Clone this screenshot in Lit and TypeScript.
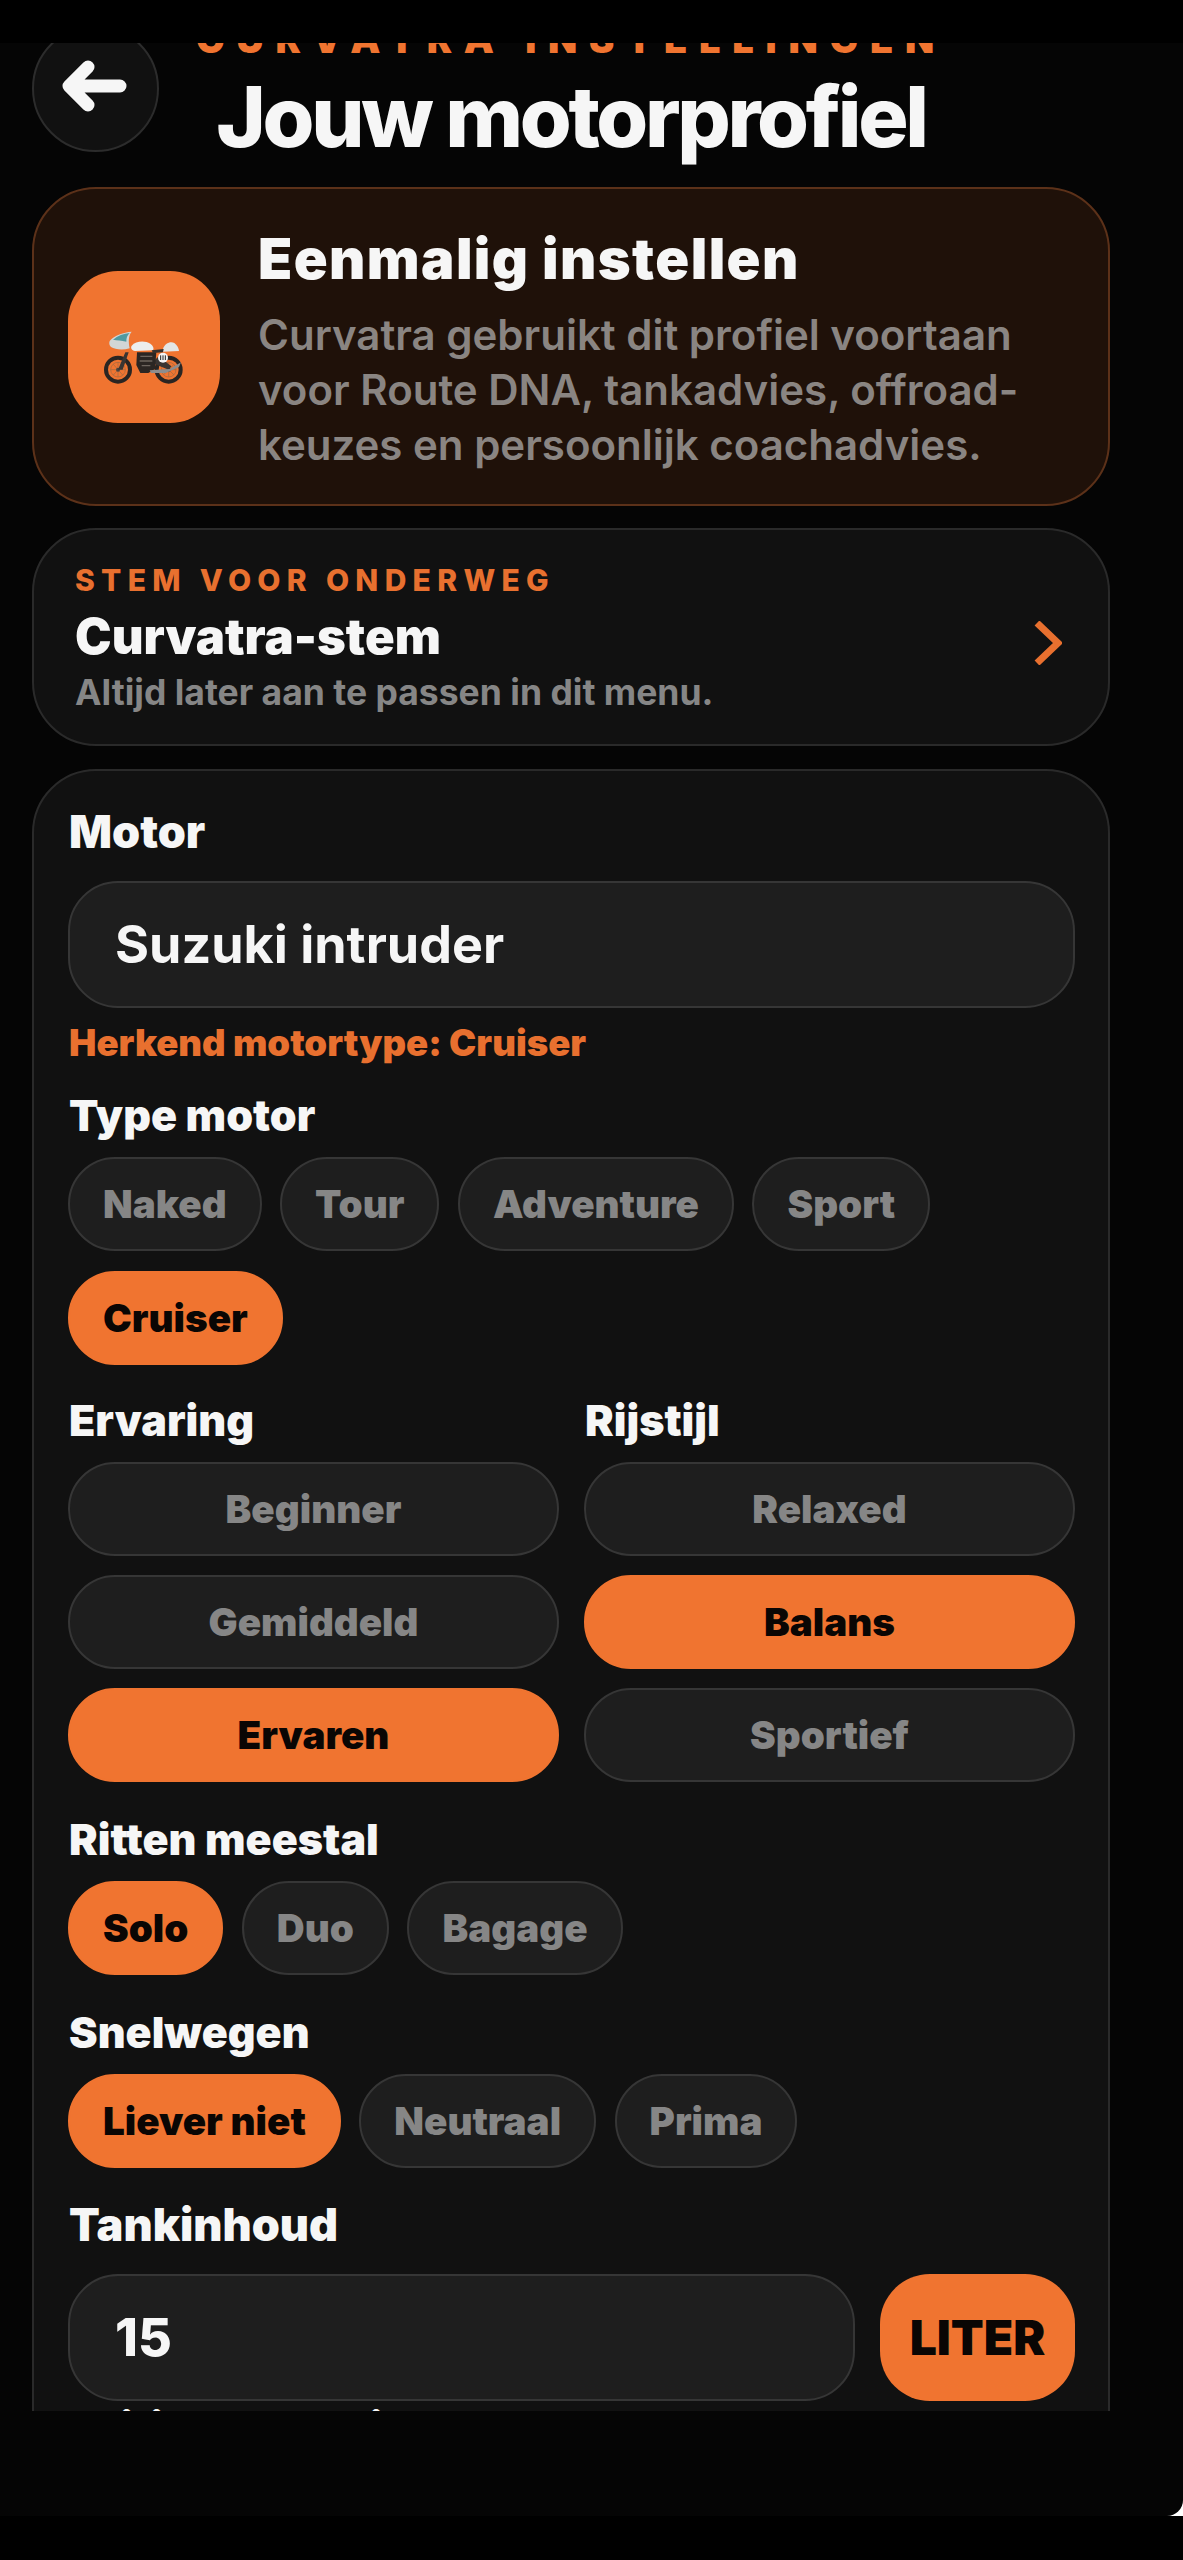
import { LitElement, html, css } from 'lit';
import { customElement } from 'lit/decorators.js';

const TYPES = [
  { name: 'Naked' },
  { name: 'Tour' },
  { name: 'Adventure' },
  { name: 'Sport' },
  { name: 'Cruiser', active: true },
];
const ERVARING = [{ name: 'Beginner' }, { name: 'Gemiddeld' }, { name: 'Ervaren', active: true }];
const RIJSTIJL = [{ name: 'Relaxed' }, { name: 'Balans', active: true }, { name: 'Sportief' }];
const RITTEN = [{ name: 'Solo', active: true }, { name: 'Duo' }, { name: 'Bagage' }];
const SNELWEGEN = [{ name: 'Liever niet', active: true }, { name: 'Neutraal' }, { name: 'Prima' }];

type Chip = { name: string; active?: boolean };

@customElement('app-root')
export class AppRoot extends LitElement {
  static styles = css`
    :host {
      display: block;
      height: 2560px;
      background: #000;
      overflow: hidden;
      font-family: Inter, "Liberation Sans", sans-serif;
      color: #f6f6f6;
    }

    .clip {
      margin-top: 43px;
      height: 2368px;
      overflow: hidden;
      background: #050505;
    }

    .content {
      width: 1078px;
      margin: -18px 0 0 32px;
    }

    /* header: back button and title share one grid cell */
    .header {
      display: grid;
      height: 162px;
    }
    .back {
      grid-area: 1 / 1;
      width: 127px;
      height: 127px;
      box-sizing: border-box;
      border-radius: 50%;
      background: #111;
      border: 2px solid #2c2c2c;
      display: flex;
      align-items: center;
      justify-content: center;
      z-index: 1;
    }
    .back svg {
      width: 127px;
      height: 127px;
      flex: none;
    }
    .titles {
      grid-area: 1 / 1;
      text-align: center;
    }
    .eyebrow {
      font-size: 38px;
      line-height: 40px;
      font-weight: 900;
      letter-spacing: 0.31em;
      color: #f07430;
      margin-top: -6px;
      white-space: nowrap;
    }
    h1 {
      margin: 12px 0 0;
      font-size: 84px;
      line-height: 92px;
      font-weight: 800;
      letter-spacing: -0.04em;
      white-space: nowrap;
    }

    .card {
      box-sizing: border-box;
      border-radius: 64px;
      border: 2px solid #2a2a2a;
      background: #111;
    }

    .hero {
      height: 319px;
      background: #1f1109;
      border-color: #5c3119;
      display: flex;
      align-items: center;
      gap: 38px;
      padding-left: 34px;
    }
    .hero-icon {
      flex: none;
      width: 152px;
      height: 152px;
      border-radius: 50px;
      background: #f07430;
    }
    .hero-icon svg {
      display: block;
      width: 152px;
      height: 152px;
    }
    .hero-text {
      padding-top: 6px;
    }
    .hero h2 {
      margin: 0;
      font-size: 56px;
      line-height: 64px;
      font-weight: 900;
      letter-spacing: 0.025em;
    }
    .hero p {
      margin: 16px 0 0;
      width: 800px;
      font-size: 42px;
      line-height: 55px;
      font-weight: 600;
      color: #8a8582;
    }

    .voice {
      height: 218px;
      margin-top: 22px;
      padding: 0 46px 0 41px;
      display: flex;
      align-items: center;
      justify-content: space-between;
    }
    .voice-kicker {
      font-size: 30px;
      line-height: 34px;
      font-weight: 800;
      letter-spacing: 0.21em;
      color: #e8702f;
      margin-top: 2px;
    }
    .voice-name {
      font-size: 49px;
      line-height: 56px;
      font-weight: 900;
      margin-top: 12px;
    }
    .voice-sub {
      font-size: 35.5px;
      line-height: 40px;
      font-weight: 700;
      color: #868686;
      margin-top: 8px;
    }
    .voice svg {
      flex: none;
      width: 28px;
      height: 44px;
      margin-top: 12px;
    }

    .form {
      margin-top: 23px;
      padding: 36px 33px 60px 34px;
      border-radius: 64px 64px 0 0;
    }
    .label {
      font-size: 43px;
      line-height: 50px;
      font-weight: 900;
      margin-bottom: 17px;
      padding-left: 1px;
      white-space: nowrap;
    }
    .label.big {
      font-size: 45px;
      margin-bottom: 24px;
    }
    .field {
      margin-top: 32px;
    }
    .motor .label {
      font-size: 45px;
      margin-bottom: 24px;
    }
    .input {
      box-sizing: border-box;
      height: 127px;
      border-radius: 50px;
      border: 2px solid #363636;
      background: #1e1e1e;
      padding-left: 45px;
      display: flex;
      align-items: center;
      font-size: 52px;
      font-weight: 700;
    }
    .hint {
      margin-top: 13px;
      padding-left: 1px;
      font-size: 36.5px;
      line-height: 44px;
      font-weight: 900;
      color: #e8702f;
    }
    .hint + .field {
      margin-top: 25px;
    }

    .chips {
      display: flex;
      flex-wrap: wrap;
      gap: 20px 18.5px;
    }
    .chip {
      box-sizing: border-box;
      height: 94px;
      padding: 0 33px;
      border-radius: 47px;
      border: 2px solid #363636;
      background: #1e1e1e;
      color: #868686;
      font-size: 38.6px;
      font-weight: 900;
      display: flex;
      align-items: center;
      justify-content: center;
      white-space: nowrap;
    }
    .chip.on {
      background: #f07430;
      border-color: #f07430;
      color: #0a0604;
    }

    .columns {
      display: grid;
      grid-template-columns: 491px 491px;
      column-gap: 25px;
      margin-top: 30px;
    }
    .columns .field {
      margin-top: 0;
    }
    .stack {
      display: flex;
      flex-direction: column;
      gap: 19px;
    }

    .tank {
      display: flex;
      gap: 25px;
    }
    .tank .input {
      flex: 1;
      font-size: 52px;
      font-weight: 800;
    }
    .unit {
      flex: none;
      width: 195px;
      height: 127px;
      border-radius: 50px;
      background: #f07430;
      color: #0a0604;
      font-size: 48px;
      font-weight: 900;
      display: flex;
      align-items: center;
      justify-content: center;
    }
    .cut {
      margin-top: 1px;
    }

    .footer {
      height: 105px;
      background: #fff;
    }
    .footer div {
      height: 105px;
      background: #050505;
      border-bottom-right-radius: 16px;
    }
  `;

  private chips(items: Chip[]) {
    return items.map(
      (c) => html`<div class="chip ${c.active ? 'on' : ''}">${c.name}</div>`
    );
  }

  private bike() {
    // drawn on the coordinates of the icon tile
    return html`<svg viewBox="55 62 456 456">
      <g fill="none" stroke="#2a2522">
        <circle cx="205" cy="358" r="36" stroke-width="12" />
        <circle cx="357" cy="358" r="36" stroke-width="12" />
      </g>
      <g fill="none" stroke="#9a6a45" stroke-width="2">
        <circle cx="205" cy="358" r="22" />
        <circle cx="357" cy="358" r="22" />
        <path d="M205 336v44M183 358h44M191 342l28 32M219 342l-28 32M357 336v44M335 358h44M341 342l32 32M373 342l-32 32" />
      </g>
      <circle cx="205" cy="358" r="6" fill="#4a4440" />
      <circle cx="357" cy="358" r="6" fill="#4a4440" />
      <path d="M205 358l22-52 10 0-18 52zM357 358l-50-20 20-20 38 30z" fill="#3a3532" />
      <path d="M262 306h58l-4 50-20 12h-24l-12-24z" fill="#2b2623" />
      <path d="M272 318h36M270 332h38M276 346h26" stroke="#6d655e" stroke-width="4" />
      <path d="M300 360l60-4 34-20-6 14-40 18h-44z" fill="#8d8d8d" />
      <path d="M180 272c14-18 42-26 66-28-10 12-10 30-6 50-20 6-44 4-56-4-6-6-6-12-4-18z" fill="#d2d6d6" />
      <path d="M190 268c14-12 32-18 50-20-8 8-10 16-10 26-14-4-28-4-40-6z" fill="#4f9aa0" />
      <path d="M246 286c12-14 40-16 56-6 8 6 12 14 8 20l-54 2c-10-2-14-10-10-16z" fill="#eceeee" />
      <path d="M340 296c4-16 22-24 34-18 8 6 14 16 14 24l-48 2z" fill="#e3e5e5" />
      <path d="M306 300l36-4-2 10-30 2z" fill="#35302d" />
      <circle cx="340" cy="322" r="15" fill="#f4f4f4" />
      <path d="M333 315v14M340 315v14M347 315v14" stroke="#222" stroke-width="3" />
    </svg>`;
  }

  render() {
    return html`
      <div class="clip">
        <div class="content">
          <div class="header">
            <div class="back">
              <svg viewBox="0 0 127 127">
                <path
                  d="M88 61H37M56 42L37 61L56 80"
                  fill="none"
                  stroke="#f6f6f6"
                  stroke-width="13"
                  stroke-linecap="round"
                  stroke-linejoin="round"
                />
              </svg>
            </div>
            <div class="titles">
              <div class="eyebrow">CURVATRA INSTELLINGEN</div>
              <h1>Jouw motorprofiel</h1>
            </div>
          </div>

          <section class="card hero">
            <div class="hero-icon">${this.bike()}</div>
            <div class="hero-text">
              <h2>Eenmalig instellen</h2>
              <p>Curvatra gebruikt dit profiel voortaan voor Route DNA, tankadvies, offroad-keuzes en persoonlijk coachadvies.</p>
            </div>
          </section>

          <section class="card voice">
            <div>
              <div class="voice-kicker">STEM VOOR ONDERWEG</div>
              <div class="voice-name">Curvatra-stem</div>
              <div class="voice-sub">Altijd later aan te passen in dit menu.</div>
            </div>
            <svg viewBox="0 0 28 44">
              <path d="M3 2L24 22L3 42" fill="none" stroke="#e8702f" stroke-width="7" />
            </svg>
          </section>

          <section class="card form">
            <div class="motor">
              <div class="label">Motor</div>
              <div class="input">Suzuki intruder</div>
            </div>
            <div class="hint">Herkend motortype: Cruiser</div>

            <div class="field">
              <div class="label">Type motor</div>
              <div class="chips">${this.chips(TYPES)}</div>
            </div>

            <div class="columns">
              <div class="field">
                <div class="label">Ervaring</div>
                <div class="stack">${this.chips(ERVARING)}</div>
              </div>
              <div class="field">
                <div class="label">Rijstijl</div>
                <div class="stack">${this.chips(RIJSTIJL)}</div>
              </div>
            </div>

            <div class="field">
              <div class="label">Ritten meestal</div>
              <div class="chips">${this.chips(RITTEN)}</div>
            </div>

            <div class="field">
              <div class="label">Snelwegen</div>
              <div class="chips">${this.chips(SNELWEGEN)}</div>
            </div>

            <div class="field">
              <div class="label big">Tankinhoud</div>
              <div class="tank">
                <div class="input">15</div>
                <div class="unit">LITER</div>
              </div>
            </div>

            <div class="label cut">Kritiek verbruik</div>
          </section>
        </div>
      </div>
      <div class="footer"><div></div></div>
    `;
  }
}
